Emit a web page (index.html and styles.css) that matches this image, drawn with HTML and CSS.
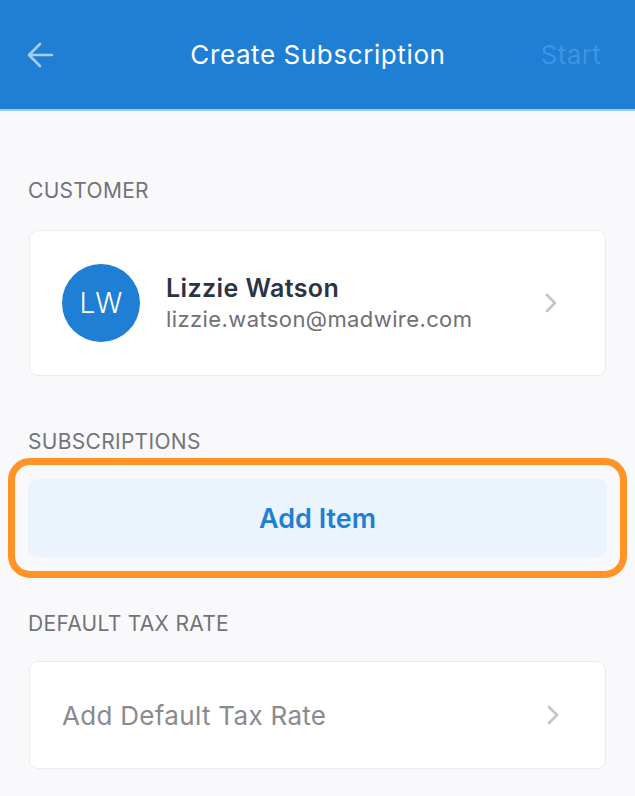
FILE: index.html
```html
<!DOCTYPE html>
<html lang="en">
<head>
    <meta charset="UTF-8">
    <title>Create Subscription</title>
    <link rel="stylesheet" href="styles.css">
</head>
<body>
    <!-- Top bar -->
    <header class="topbar">
        <button class="back-btn" aria-label="Back">
            <svg width="28" height="28" viewBox="0 0 28 28">
                <path d="M26 14H3M14 3L3 14l11 11" fill="none" stroke="#a9cdf0" stroke-width="2.6" stroke-linecap="round" stroke-linejoin="round"/>
            </svg>
        </button>
        <h1 class="title">Create Subscription</h1>
        <span class="start">Start</span>
    </header>

    <main class="content">
        <div class="section-label">CUSTOMER</div>
        <div class="card customer">
            <div class="avatar">LW</div>
            <div class="customer-info">
                <div class="name">Lizzie Watson</div>
                <div class="email">lizzie.watson@madwire.com</div>
            </div>
            <svg class="chevron" width="12" height="20" viewBox="0 0 12 20">
                <path d="M2 2l8 8-8 8" fill="none" stroke="#c4c4c8" stroke-width="2.6" stroke-linecap="round" stroke-linejoin="round"/>
            </svg>
        </div>

        <div class="section-label">SUBSCRIPTIONS</div>
        <div class="highlight">
            <button class="add-item">Add Item</button>
        </div>

        <div class="section-label tax-label">DEFAULT TAX RATE</div>
        <div class="card tax">
            <span class="placeholder">Add Default Tax Rate</span>
            <svg class="chevron" width="12" height="20" viewBox="0 0 12 20">
                <path d="M2 2l8 8-8 8" fill="none" stroke="#c4c4c8" stroke-width="2.6" stroke-linecap="round" stroke-linejoin="round"/>
            </svg>
        </div>
    </main>
</body>
</html>
```

FILE: styles.css
```css
body {
    margin: 0;
    height: 796px;
    overflow: hidden;
    background: #f9f9fb;
    font-family: 'Inter', 'Roboto', sans-serif;
}

.topbar {
    height: 111px;
    background: #1f7fd5;
    border-bottom: 2px solid #9cc6ee;
    display: flex;
    align-items: center;
    justify-content: space-between;
    padding: 0 34px 0 26px;
    box-sizing: border-box;
}

.back-btn {
    background: none;
    border: none;
    padding: 0;
    width: 28px;
    height: 28px;
    display: flex;
}

.title {
    margin: 0;
    font-size: 26px;
    font-weight: 400;
    letter-spacing: 0.6px;
    color: #ffffff;
    padding-left: 41px;
}

.start {
    font-size: 26px;
    letter-spacing: 0.3px;
    color: #3d95e2;
}

.content {
    padding: 68px 29px 0 29px;
}

.section-label {
    font-size: 21px;
    color: #737378;
    letter-spacing: 0.3px;
    margin-left: -1px;
    line-height: 24px;
}

.card {
    background: #ffffff;
    border: 1px solid #ececf0;
    border-radius: 9px;
    display: flex;
    align-items: center;
    box-sizing: border-box;
}

.customer {
    height: 146px;
    margin: 27px 0 54px 0;
    padding: 0 48px 0 32px;
}

.avatar {
    width: 78px;
    height: 78px;
    border-radius: 50%;
    background: #1f7fd5;
    color: #ffffff;
    font-size: 28px;
    font-weight: 300;
    display: flex;
    align-items: center;
    justify-content: center;
    flex-shrink: 0;
}

.customer-info {
    flex: 1;
    margin-left: 26px;
}

.name {
    font-size: 25px;
    font-weight: 600;
    color: #2a3444;
    line-height: 31px;
    letter-spacing: 0.4px;
}

.email {
    font-size: 22px;
    color: #6f6f74;
    line-height: 30px;
    letter-spacing: 0.4px;
}

.highlight {
    margin: 4px -21px 0 -21px;
    border: 7px solid #ff9326;
    border-radius: 22px;
    padding: 14px 13px;
}

.add-item {
    display: block;
    width: 100%;
    height: 78px;
    background: #ebf3fd;
    border: none;
    border-radius: 9px;
    color: #1f7fd5;
    font-family: inherit;
    font-size: 27px;
    font-weight: 600;
}

.tax-label {
    margin-top: 34px;
}

.tax {
    height: 108px;
    margin-top: 25px;
    padding: 0 46px 0 32px;
    justify-content: space-between;
}

.placeholder {
    font-size: 26px;
    color: #8a8a8f;
    letter-spacing: 0.3px;
}
```
